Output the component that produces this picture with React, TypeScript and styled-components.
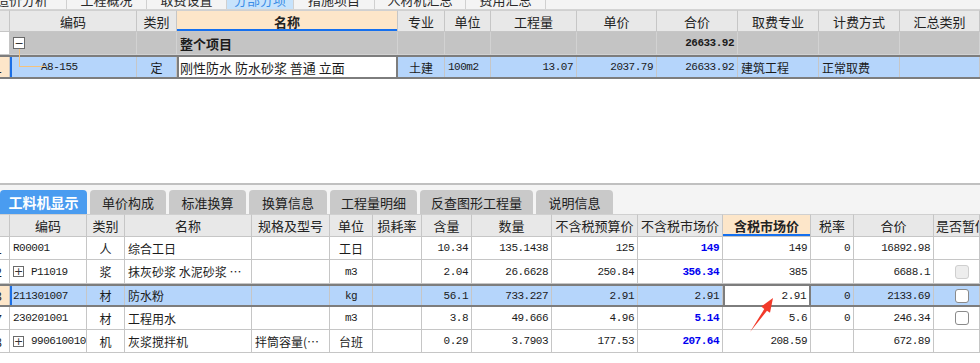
import React from "react";
import styled, { createGlobalStyle, css } from "styled-components";

const GlobalStyle = createGlobalStyle`
  html, body {
    margin: 0;
    padding: 0;
    background: #ffffff;
  }
  body {
    font-family: "Noto Sans CJK SC", "Noto Sans", sans-serif;
    font-size: 12px;
    color: #1b1b1b;
  }
`;

const UPPER_COLS = "10px 127px 40px 221px 47px 46px 86px 80px 81px 81px 81px 80px";
const LOWER_COLS = "10px 77px 38px 127px 78px 43px 49px 50px 80px 86px 85px 88px 43px 80px 46px";

type Align = "left" | "center" | "right";

interface CellDef {
  text?: string;
  align?: Align;
  mono?: boolean;
  bold?: boolean;
  blue?: boolean;
  edit?: boolean;
  expand?: "+" | "-";
  check?: "on" | "off";
  marker?: boolean;
  num?: boolean;
}

const Page = styled.div`
  position: relative;
  width: 980px;
  height: 363px;
  overflow: hidden;
  display: flex;
  flex-direction: column;
  background: #fff;
`;

/* ---------- top module tabs (cut by the screenshot) ---------- */
const TopTabs = styled.div`
  display: flex;
  height: 10px;
  flex: none;
  background: #f4f4f4;
  border-bottom: 1px solid #d4d4d4;
  box-sizing: border-box;
`;

const TopTab = styled.div<{ $w: number; $active?: boolean; $end?: boolean }>`
  width: ${(p) => p.$w}px;
  flex: none;
  box-sizing: border-box;
  border-right: 1px solid #d0d0d0;
  background: ${(p) => (p.$active ? "#c7e3fc" : "transparent")};
  color: ${(p) => (p.$active ? "#3b8de6" : "#2a2a2a")};
  display: flex;
  align-items: flex-end;
  justify-content: ${(p) => (p.$end ? "flex-end" : "center")};
  padding-right: ${(p) => (p.$end ? "18px" : "0")};
  padding-bottom: 3px;
  overflow: hidden;
  font-size: 13px;
  line-height: 13px;
  white-space: nowrap;
`;

/* ---------- grids ---------- */
const Grid = styled.div`
  display: flex;
  flex-direction: column;
  flex: none;
  background: #fff;
`;

const Cell = styled.div<{
  $align?: Align;
  $mono?: boolean;
  $bold?: boolean;
  $blue?: boolean;
  $edit?: boolean;
  $marker?: boolean;
  $num?: boolean;
}>`
  position: relative;
  box-sizing: border-box;
  border-right: 1px solid #c6c6c6;
  border-bottom: 1px solid #c6c6c6;
  display: flex;
  align-items: center;
  justify-content: ${(p) =>
    p.$align === "right" ? "flex-end" : p.$align === "center" ? "center" : "flex-start"};
  padding: 0 3px;
  overflow: hidden;
  white-space: nowrap;
  font-size: 12px;
  color: ${(p) => (p.$blue ? "#0000f0" : "#1b1b1b")};
  font-weight: ${(p) => (p.$bold || p.$blue ? 700 : 400)};
  ${(p) =>
    p.$mono &&
    css`
      font-family: "Liberation Mono", "DejaVu Sans Mono", monospace;
      font-size: 11px;
      letter-spacing: -0.5px;
    `}
  ${(p) =>
    p.$edit &&
    css`
      background: #ffffff;
      border-left: 2px solid #7d7d7d;
      border-right: 2px solid #7d7d7d;
    `}
  ${(p) =>
    p.$marker &&
    css`
      box-shadow: inset 2px 0 0 #1c6fe6;
    `}
  ${(p) =>
    p.$num &&
    css`
      justify-content: flex-end;
      padding: 0 7px 0 0;
    `}
`;

const HeadRow = styled.div<{ $cols: string; $h: number }>`
  display: grid;
  grid-template-columns: ${(p) => p.$cols};
  height: ${(p) => p.$h}px;
  background: #e8e8e8;
`;

const HeadCell = styled.div<{ $hot?: boolean; $align?: Align }>`
  box-sizing: border-box;
  border-right: 1px solid #c6c6c6;
  border-bottom: 1px solid #c6c6c6;
  border-top: 1px solid #d0d0d0;
  display: flex;
  align-items: center;
  justify-content: ${(p) => (p.$align === "left" ? "flex-start" : "center")};
  padding-left: ${(p) => (p.$align === "left" ? "2px" : "0")};
  white-space: nowrap;
  overflow: hidden;
  font-size: 13px;
  color: #222;
  ${(p) =>
    p.$hot &&
    css`
      background: #fde6c9;
      font-weight: 700;
      box-shadow: inset 0 -2px 0 #1570ef;
    `}
`;

const DataRow = styled.div<{ $cols: string; $h: number; $bg?: string; $sel?: boolean }>`
  display: grid;
  grid-template-columns: ${(p) => p.$cols};
  height: ${(p) => p.$h}px;
  box-sizing: border-box;
  background: ${(p) => p.$bg || "#ffffff"};
  ${(p) =>
    p.$sel &&
    css`
      background: #b5d5fb;
      border-top: 2px solid #7d7d7d;
      border-bottom: 2px solid #7d7d7d;
      ${Cell} {
        border-bottom: none;
      }
    `}
`;

const GroupCell = styled(Cell)`
  border-color: #d2d2d2;
`;

const NumCell = styled(Cell)<{ $hl?: boolean }>`
  background: ${(p) => (p.$hl ? "#fde6c9" : "#ffffff")};
`;

const ExpandBox = styled.span<{ $big?: boolean }>`
  flex: none;
  box-sizing: border-box;
  width: ${(p) => (p.$big ? 12 : 11)}px;
  height: ${(p) => (p.$big ? 12 : 11)}px;
  border: 1px solid #6a6a6a;
  background: #fff;
  margin-right: 7px;
  display: flex;
  align-items: center;
  justify-content: center;
  font-family: "DejaVu Sans", sans-serif;
  font-size: 11px;
  line-height: 1;
  color: #333;
  font-weight: 400;
  letter-spacing: 0;
`;

const Connector = styled.span`
  position: absolute;
  left: 9px;
  top: -8px;
  width: 26px;
  height: 17px;
  border-left: 1px solid #f5c27c;
  border-bottom: 1px solid #f5c27c;
`;

const CheckBox = styled.span<{ $off?: boolean }>`
  box-sizing: border-box;
  width: 14px;
  height: 14px;
  margin-left: 18px;
  border-radius: 3px;
  border: 1px solid ${(p) => (p.$off ? "#cfcfcf" : "#8a8a8a")};
  background: ${(p) => (p.$off ? "#ededed" : "#ffffff")};
`;

const Spacer = styled.div`
  height: 104px;
  flex: none;
  background: #fff;
`;

const Divider = styled.div`
  height: 2px;
  flex: none;
  background: #c0c0c0;
`;

/* ---------- lower panel ---------- */
const Panel = styled.div`
  display: flex;
  flex-direction: column;
  flex: 1;
  background: #fff;
`;

const PanelTabs = styled.div`
  display: flex;
  gap: 3px;
  height: 29px;
  padding-top: 5px;
  box-sizing: border-box;
  background: #f4f4f4;
`;

const PanelTab = styled.div<{ $w: number; $active?: boolean }>`
  width: ${(p) => p.$w}px;
  flex: none;
  border-radius: 4px 4px 0 0;
  display: flex;
  align-items: center;
  justify-content: center;
  font-size: 13px;
  white-space: nowrap;
  background: ${(p) => (p.$active ? "#4a9cf0" : "#c9c9c9")};
  color: ${(p) => (p.$active ? "#ffffff" : "#222222")};
  font-weight: ${(p) => (p.$active ? 700 : 400)};
  font-size: ${(p) => (p.$active ? "14px" : "13px")};
`;

const Arrow = styled.svg`
  position: absolute;
  left: 745px;
  top: 293px;
  width: 35px;
  height: 45px;
  pointer-events: none;
`;

/* ---------- data ---------- */
const topTabs = [
  { w: 67, label: "造价分析", end: true },
  { w: 80, label: "工程概况" },
  { w: 80, label: "取费设置" },
  { w: 67, label: "分部分项", active: true },
  { w: 81, label: "措施项目" },
  { w: 91, label: "人材机汇总" },
  { w: 80, label: "费用汇总" },
];

const upperHeads = ["", "编码", "类别", "名称", "专业", "单位", "工程量", "单价", "合价", "取费专业", "计费方式", "汇总类别"];

const lowerHeads = [
  "",
  "编码",
  "类别",
  "名称",
  "规格及型号",
  "单位",
  "损耗率",
  "含量",
  "数量",
  "不含税预算价",
  "不含税市场价",
  "含税市场价",
  "税率",
  "合价",
  "是否暂估",
];

const panelTabs = [
  { w: 87, label: "工料机显示", active: true },
  { w: 76, label: "单价构成" },
  { w: 77, label: "标准换算" },
  { w: 78, label: "换算信息" },
  { w: 87, label: "工程量明细" },
  { w: 113, label: "反查图形工程量" },
  { w: 77, label: "说明信息" },
];

interface LowerRow {
  no: string;
  sel?: boolean;
  h: number;
  cells: CellDef[];
}

const R = (text: string, extra: Partial<CellDef> = {}): CellDef => ({ text, align: "right", mono: true, ...extra });

const lowerRows: LowerRow[] = [
  {
    no: "1",
    h: 23,
    cells: [
      { text: "R00001", mono: true },
      { text: "人", align: "center" },
      { text: "综合工日" },
      {},
      { text: "工日", align: "center" },
      {},
      R("10.34"),
      R("135.1438"),
      R("125"),
      R("149", { blue: true }),
      R("149"),
      R("0"),
      R("16892.98"),
      {},
    ],
  },
  {
    no: "2",
    h: 24,
    cells: [
      { text: "P11019", mono: true, expand: "+" },
      { text: "浆", align: "center" },
      { text: "抹灰砂浆 水泥砂浆 ⋯" },
      {},
      { text: "m3", align: "center", mono: true },
      {},
      R("2.04"),
      R("26.6628"),
      R("250.84"),
      R("356.34", { blue: true }),
      R("385"),
      {},
      R("6688.1"),
      { check: "off" },
    ],
  },
  {
    no: "3",
    sel: true,
    h: 23,
    cells: [
      { text: "211301007", mono: true, marker: true },
      { text: "材", align: "center" },
      { text: "防水粉" },
      {},
      { text: "kg", align: "center", mono: true },
      {},
      R("56.1"),
      R("733.227"),
      R("2.91"),
      R("2.91"),
      R("2.91", { edit: true }),
      R("0"),
      R("2133.69"),
      { check: "on" },
    ],
  },
  {
    no: "7",
    h: 23,
    cells: [
      { text: "230201001", mono: true },
      { text: "材", align: "center" },
      { text: "工程用水" },
      {},
      { text: "m3", align: "center", mono: true },
      {},
      R("3.8"),
      R("49.666"),
      R("4.96"),
      R("5.14", { blue: true }),
      R("5.6"),
      R("0"),
      R("246.34"),
      { check: "on" },
    ],
  },
  {
    no: "8",
    h: 23,
    cells: [
      { text: "990610010", mono: true, expand: "+" },
      { text: "机", align: "center" },
      { text: "灰浆搅拌机" },
      { text: "拌筒容量(⋯" },
      { text: "台班", align: "center" },
      {},
      R("0.29"),
      R("3.7903"),
      R("177.53"),
      R("207.64", { blue: true }),
      R("208.59"),
      {},
      R("672.89"),
      {},
    ],
  },
];

const renderCell = (c: CellDef, i: number) => (
  <Cell
    key={i}
    $align={c.align}
    $mono={c.mono}
    $bold={c.bold}
    $blue={c.blue}
    $edit={c.edit}
    $marker={c.marker}
  >
    {c.expand && <ExpandBox>{c.expand}</ExpandBox>}
    {c.check && <CheckBox $off={c.check === "off"} />}
    {c.text}
  </Cell>
);

const App: React.FC = () => {
  return (
    <Page>
      <GlobalStyle />

      <TopTabs>
        {topTabs.map((t) => (
          <TopTab key={t.label} $w={t.w} $active={t.active} $end={t.end}>
            {t.label}
          </TopTab>
        ))}
      </TopTabs>

      <Grid>
        <HeadRow $cols={UPPER_COLS} $h={22}>
          {upperHeads.map((h, i) => (
            <HeadCell key={i} $hot={h === "名称"}>
              {h}
            </HeadCell>
          ))}
        </HeadRow>

        <DataRow $cols={UPPER_COLS} $h={23} $bg="#c4c4c4">
          <NumCell />
          <GroupCell>
            <ExpandBox $big>−</ExpandBox>
          </GroupCell>
          <GroupCell />
          <GroupCell $bold style={{ fontSize: 13 }}>
            整个项目
          </GroupCell>
          <GroupCell />
          <GroupCell />
          <GroupCell />
          <GroupCell />
          <GroupCell $align="right" $mono $bold>
            26633.92
          </GroupCell>
          <GroupCell />
          <GroupCell />
          <GroupCell />
        </DataRow>

        <DataRow $cols={UPPER_COLS} $h={24} $sel>
          <NumCell $num $hl>
            1
          </NumCell>
          <Cell $mono $marker style={{ paddingLeft: 31, overflow: "visible" }}>
            <Connector />
            A8-155
          </Cell>
          {renderCell({ text: "定", align: "center" }, 2)}
          <Cell $edit style={{ fontSize: 13, paddingLeft: 1 }}>
            刚性防水 防水砂浆 普通 立面
          </Cell>
          {renderCell({ text: "土建", align: "center" }, 4)}
          {renderCell({ text: "100m2", mono: true }, 5)}
          {renderCell(R("13.07"), 6)}
          {renderCell(R("2037.79"), 7)}
          {renderCell(R("26633.92"), 8)}
          {renderCell({ text: "建筑工程" }, 9)}
          {renderCell({ text: "正常取费" }, 10)}
          {renderCell({}, 11)}
        </DataRow>
      </Grid>

      <Spacer />
      <Divider />

      <Panel>
        <PanelTabs>
          {panelTabs.map((t) => (
            <PanelTab key={t.label} $w={t.w} $active={t.active}>
              {t.label}
            </PanelTab>
          ))}
        </PanelTabs>

        <Grid>
          <HeadRow $cols={LOWER_COLS} $h={23}>
            {lowerHeads.map((h, i) => (
              <HeadCell key={i} $hot={h === "含税市场价"} $align={h === "是否暂估" ? "left" : "center"}>
                {h}
              </HeadCell>
            ))}
          </HeadRow>

          {lowerRows.map((r) => (
            <DataRow key={r.no} $cols={LOWER_COLS} $h={r.h} $sel={r.sel}>
              <NumCell $num $hl={r.sel}>
                {r.no}
              </NumCell>
              {r.cells.map((c, i) => renderCell(c, i))}
            </DataRow>
          ))}
        </Grid>
      </Panel>

      <Arrow viewBox="0 0 35 45">
        <polygon
          points="5,39 19.3,15.9 16.2,13.6 28,5 25,19.8 22,17.8"
          fill="#f23a2a"
        />
      </Arrow>
    </Page>
  );
};

export default App;
